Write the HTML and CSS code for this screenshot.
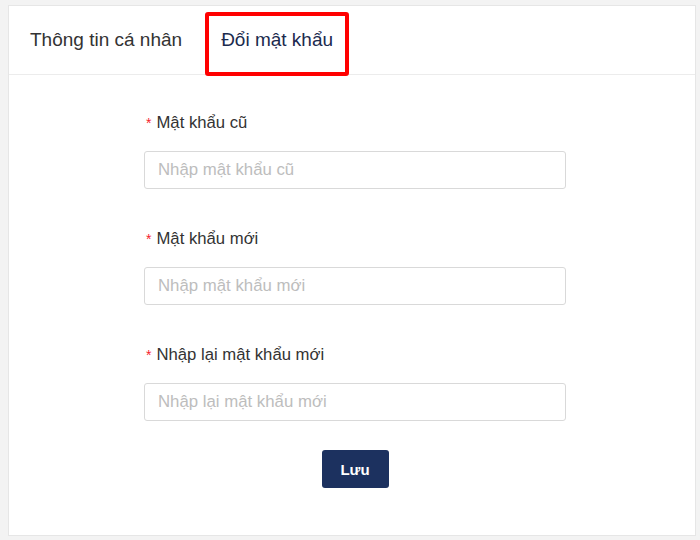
FILE: index.html
```html
<!DOCTYPE html>
<html lang="vi">
<head>
<meta charset="utf-8">
<title>Đổi mật khẩu</title>
<link rel="stylesheet" href="styles.css">
</head>
<body>
<div class="card">
  <div class="tabs">
    <div class="tab">Thông tin cá nhân</div>
    <div class="tab tab-active">Đổi mật khẩu</div>
  </div>
  <form class="form">
    <div class="field">
      <label class="label"><span class="req">*</span>Mật khẩu cũ</label>
      <input class="input" type="password" placeholder="Nhập mật khẩu cũ">
    </div>
    <div class="field">
      <label class="label"><span class="req">*</span>Mật khẩu mới</label>
      <input class="input" type="password" placeholder="Nhập mật khẩu mới">
    </div>
    <div class="field field-last">
      <label class="label"><span class="req">*</span>Nhập lại mật khẩu mới</label>
      <input class="input" type="password" placeholder="Nhập lại mật khẩu mới">
    </div>
    <div class="actions">
      <button class="btn" type="button">Lưu</button>
    </div>
  </form>
</div>
</body>
</html>
```
FILE: styles.css
```css
html, body {
  margin: 0;
  padding: 0;
}
body {
  background: #f3f3f3;
  font-family: "Liberation Sans", Arial, sans-serif;
  color: #333;
}
.card {
  margin: 5px 4px 0 8px;
  height: 531px;
  box-sizing: border-box;
  border: 1px solid #e6e6e6;
  background: #fff;
}
.tabs {
  display: flex;
  height: 68px;
  padding-left: 21px;
  gap: 39px;
  border-bottom: 1px solid #ececec;
}
.tab {
  position: relative;
  display: flex;
  align-items: center;
  font-size: 19px;
  color: #333;
}
.tab-active {
  color: #1b2a4e;
}
.tab-active::after {
  content: "";
  position: absolute;
  left: -16px;
  right: -16px;
  top: 6px;
  height: 64px;
  box-sizing: border-box;
  border: 4px solid #f00;
  border-radius: 3px;
}
.form {
  margin-left: 135px;
  width: 422px;
  padding-top: 38px;
}
.field {
  display: flex;
  flex-direction: column;
  gap: 18px;
  margin-bottom: 40px;
}
.field-last {
  margin-bottom: 29px;
}
.label {
  height: 20px;
  line-height: 20px;
  font-size: 16.7px;
  color: #333;
  padding-left: 2px;
}
.req {
  color: #f5222d;
  font-size: 14px;
  margin-right: 5px;
}
.input {
  height: 38px;
  box-sizing: border-box;
  border: 1px solid #d9d9d9;
  border-radius: 3px;
  padding: 0 13px;
  font-family: "Liberation Sans", Arial, sans-serif;
  font-size: 16.8px;
  color: #333;
  outline: none;
}
.input::placeholder {
  color: #bdbdbd;
}
.actions {
  display: flex;
  justify-content: center;
}
.btn {
  width: 67px;
  height: 38px;
  border: none;
  border-radius: 3px;
  background: #1c315f;
  color: #fff;
  font-family: "Liberation Sans", Arial, sans-serif;
  font-size: 15px;
  font-weight: bold;
  cursor: pointer;
}
```
